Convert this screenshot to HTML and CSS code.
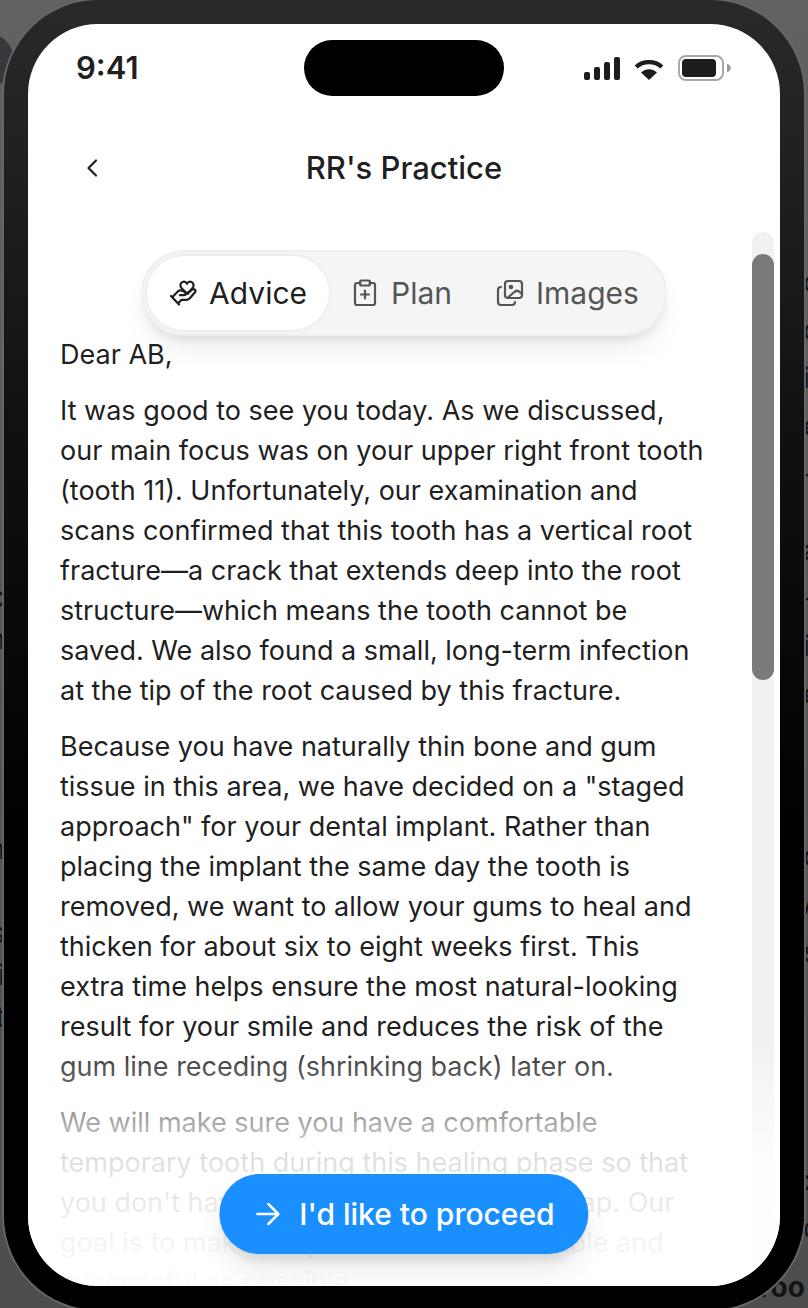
FILE: index.html
```html
<!DOCTYPE html>
<html lang="en">
<head>
  <meta charset="UTF-8" />
  <meta name="viewport" content="width=device-width, initial-scale=1.0" />
  <title>RR's Practice</title>
  <link rel="stylesheet" href="styles.css">
</head>
<body>
  <!-- Dimmed page behind the phone -->
  <div class="backdrop" aria-hidden="true">
    <div class="avatar"></div>
    <div class="page-col page-left">
      <p>c<br>n</p>
      <p>h</p>
      <p>s<br>i<br>t</p>
    </div>
    <div class="page-col page-right">
      <p>o<br>o<br>i<br>e<br>-</p>
      <p>a<br>-<br>i<br>e</p>
      <p>o<br>A<br>s</p>
      <p>:<br>c</p>
    </div>
    <strong class="page-heading">Too</strong>
  </div>

  <main class="phone">
    <div class="status-bar">
      <span class="time">9:41</span>
      <div class="island"></div>
      <div class="status-icons">
        <svg width="36" height="24" viewBox="0 0 36 24" fill="#1c1c1c">
          <rect x="0" y="16" width="6" height="8" rx="2" />
          <rect x="10" y="11" width="6" height="13" rx="2" />
          <rect x="20" y="6" width="6" height="18" rx="2" />
          <rect x="30" y="1" width="6" height="23" rx="2" />
        </svg>
        <svg width="30" height="24" viewBox="0 0 30 24">
          <path d="M2.2 11C9 4.500 21 4.500 27.800 11" fill="none" stroke="#1c1c1c" stroke-width="4.400" />
          <path d="M15 24 7 16.500C11.500 12 18.500 12 23 16.500Z" fill="#1c1c1c" />
        </svg>
        <svg width="54" height="26" viewBox="0 0 54 26">
          <rect x="1" y="1" width="44" height="24" rx="7" fill="none" stroke="#a9a9a9" stroke-width="2" />
          <rect x="4" y="4" width="34" height="18" rx="4" fill="#1c1c1c" />
          <path d="M49 9c5 1 5 7 0 8z" fill="#9a9a9a" />
        </svg>
      </div>
    </div>

    <header class="title-bar">
      <button class="back" type="button" aria-label="Back">
        <svg width="24" height="24" viewBox="0 0 24 24"><path d="M16 4.500 8.500 12 16 19.500" /></svg>
      </button>
      <h1>RR's Practice</h1>
    </header>

    <div class="scroll-area">
      <nav class="tabs" aria-label="Sections">
        <button class="tab active" type="button">
          <svg width="28" height="28" viewBox="0 0 28 28">
            <path d="M18.500 15 12.600 9.200c-1.900-2-1.500-5.200.9-6.200 1.800-.7 3.500 0 4.500 1.700 1-1.700 2.700-2.400 4.500-1.700 2.400 1 2.800 4.200.9 6.200z" />
            <path d="M3.500 18 9 12.200c.9-.8 1.900-1 3-.7l3.500 1.300c2 .8 1.500 3.400-.6 3.400H11" />
            <path d="M16 15.600 23.300 10.500c2.200-1.300 4.100.9 2.700 2.800l-5.200 6c-1 1.100-2.200 1.600-3.700 1.600h-4.500L9.300 24" />
            <path d="M2 17 10 25.500" />
          </svg>
          Advice
        </button>
        <button class="tab" type="button">
          <svg width="28" height="28" viewBox="0 0 28 28">
            <path d="M9.500 4H6Q4 4 4 6V24Q4 26 6 26H22Q24 26 24 24V6Q24 4 22 4H18.500" />
            <rect x="9" y="1.500" width="10" height="5" rx="1.500" />
            <path d="M14 11.500v8M10 15.500h8" />
          </svg>
          Plan
        </button>
        <button class="tab" type="button">
          <svg width="28" height="28" viewBox="0 0 28 28">
            <rect x="9" y="2" width="17" height="17" rx="3" />
            <path d="M5 8Q2 8 2 11V23Q2 26 5 26H16Q19 26 19 23" />
            <path d="M12 18.500 19 12.500Q21 11 23 12.500L26 15" />
            <circle cx="15" cy="8" r="1.200" fill="currentColor" />
          </svg>
          Images
        </button>
      </nav>

      <article class="letter">
        <p>Dear AB,</p>
        <p>It was good to see you today. As we discussed, our main focus was on your upper right front tooth (tooth 11). Unfortunately, our examination and scans confirmed that this tooth has a vertical root fracture—a crack that extends deep into the root structure—which means the tooth cannot be saved. We also found a small, long-term infection at the tip of the root caused by this fracture.</p>
        <p>Because you have naturally thin bone and gum tissue in this area, we have decided on a "staged approach" for your dental implant. Rather than placing the implant the same day the tooth is removed, we want to allow your gums to heal and thicken for about six to eight weeks first. This extra time helps ensure the most natural-looking result for your smile and reduces the risk of the gum line receding (shrinking back) later on.</p>
        <p>We will make sure you have a comfortable temporary tooth during this healing phase so that you don't have to live with a noticeable gap. Our goal is to make the process as comfortable and successful as possible.</p>
      </article>

      <div class="scrollbar"><div class="thumb"></div></div>
    </div>

    <div class="fade"></div>
    <button class="proceed" type="button">
      <svg width="28" height="28" viewBox="0 0 28 28"><path d="M4 14H25M15 4 25 14 15 24" /></svg>
      I'd like to proceed
    </button>
  </main>
</body>
</html>
```
FILE: styles.css
```css
/* Variables & Reset */
:root {
  --text: #1f1f1f;
  --text-light: #555555;
  --primary: #1a8fff;
  --surface: #f5f5f5;
}
* { margin: 0; padding: 0; box-sizing: border-box; }
body { position: relative; height: 100vh; overflow: hidden; font-family: Inter, "Liberation Sans", sans-serif; color: var(--text); background: linear-gradient(#626262, #4d4d4d); }
button { font: inherit; color: inherit; border: none; background: none; cursor: pointer; }
svg { flex: none; }

/* Backdrop */
.backdrop { position: absolute; inset: 0; overflow: hidden; color: #141416; font-size: 28px; line-height: 42px; }
.avatar { position: absolute; top: 33px; left: -40px; width: 54px; height: 54px; border-radius: 50%; background: #37383c; }
.page-col { position: absolute; display: flex; flex-direction: column; }
.page-left { top: 576px; right: calc(100% - 5px); text-align: right; }
.page-left p:nth-child(2) { margin-top: 168px; }
.page-left p:nth-child(3) { margin-top: 42px; }
.page-right { top: 258px; left: calc(100% - 5px); gap: 40px; line-height: 48px; }
.page-right p:nth-child(2) { margin-top: -12px; }
.page-right p:nth-child(3) { margin-top: 74px; }
.page-right p:nth-child(4) { margin-top: 140px; }
.page-heading { position: absolute; left: calc(100% - 54px); bottom: 0; }

/* Phone */
.phone { position: relative; display: flex; flex-direction: column; width: calc(100% - 8px); height: calc(100vh + 2px); margin: 0 auto; border-radius: 94px; background: linear-gradient(#29292b, #1d1d1d 220px, #111113 420px, #000000 850px); padding: 24px; box-shadow: 0 0 0 2px #666666; }
.phone::before { content: ''; position: absolute; inset: 24px; border-radius: 70px; background: #ffffff; }

/* Status bar */
.status-bar { position: relative; display: grid; grid-template-columns: 1fr 200px 1fr; align-items: center; height: 88px; flex: none; padding: 0 48px; }
.time { font-size: 31px; line-height: 40px; font-weight: 600; }
.island { height: 56px; border-radius: 28px; background: #000000; }
.status-icons { display: flex; align-items: center; justify-content: flex-end; gap: 14px; }

/* Title */
.title-bar { position: relative; display: grid; grid-template-columns: 48px 1fr 48px; align-items: center; height: 112px; flex: none; margin-bottom: 8px; padding: 0 40px; }
.title-bar h1 { font-size: 31px; line-height: 40px; font-weight: 500; text-align: center; }
.back { display: flex; align-items: center; justify-content: center; height: 48px; }
.back path { fill: none; stroke: var(--text); stroke-width: 2.2; stroke-linecap: round; stroke-linejoin: round; }

/* Letter */
.scroll-area { position: relative; flex: 1; min-height: 0; padding: 18px 32px 0; overflow: hidden; border-radius: 0 0 70px 70px; }
.letter { display: flex; flex-direction: column; gap: 16px; margin-top: -1px; padding-right: 40px; font-size: 27px; line-height: 40px; }

/* Tabs */
.tabs { position: relative; z-index: 1; display: flex; width: fit-content; margin: 0 auto; padding: 4px; border: 2px solid #efefef; border-radius: 43px; background: var(--surface); box-shadow: 0 20px 30px -6px rgba(0,0,0,0.06), 0 8px 12px -4px rgba(0,0,0,0.1); }
.tab { display: flex; align-items: center; gap: 12px; height: 74px; padding: 0 22px; border-radius: 37px; font-size: 30px; color: var(--text-light); }
.tab svg { fill: none; stroke: currentColor; stroke-width: 2.2; stroke-linecap: round; stroke-linejoin: round; }
.tab.active { color: var(--text); background: #ffffff; box-shadow: 0 0 4px rgba(0,0,0,0.08); }

/* Scrollbar */
.scrollbar { position: absolute; top: 0; right: 6px; bottom: 0; width: 22px; padding-top: 22px; border-radius: 11px; background: #f1f1f1; }
.thumb { height: 41.3%; border-radius: 11px; background: #7a7a7a; }

/* Bottom fade and call to action */
.fade { position: absolute; left: 24px; right: 24px; bottom: 24px; height: 246px; border-radius: 0 0 70px 70px; background: linear-gradient(rgba(255,255,255,0), rgba(255,255,255,0.2) 10%, rgba(255,255,255,0.6) 33%, rgba(255,255,255,0.85) 46%, rgba(255,255,255,0.9) 66%, rgba(255,255,255,0.95) 82%, rgba(255,255,255,0.98)); }
.proceed { position: absolute; left: 50%; bottom: 56px; transform: translateX(-50%); display: flex; align-items: center; gap: 18px; height: 80px; padding: 0 34px; border-radius: 40px; font-size: 30px; font-weight: 500; white-space: nowrap; color: #ffffff; background: var(--primary); box-shadow: 0 20px 30px -6px rgba(0,0,0,0.1), 0 8px 12px -4px rgba(0,0,0,0.12); }
.proceed path { fill: none; stroke: currentColor; stroke-width: 2.5; stroke-linecap: round; stroke-linejoin: round; }
```
